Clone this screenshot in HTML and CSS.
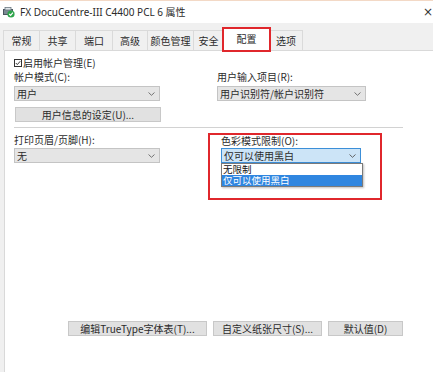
FILE: index.html
```html
<!DOCTYPE html>
<html>
<head>
<meta charset="utf-8">
<link rel="stylesheet" href="styles.css">
</head>
<body>
<div class="titlebar">
  <svg class="appicon" width="12" height="11" viewBox="0 0 12 11">
    <rect x="0.5" y="2.5" width="9" height="5" fill="#7c8a94" stroke="#4a5660"/>
    <rect x="2" y="0.5" width="6" height="2.5" fill="#dfe6ea" stroke="#6b7880" stroke-width="0.8"/>
    <circle cx="8" cy="7" r="3.6" fill="#2da44a"/>
    <path d="M6.2 7 L7.6 8.4 L9.9 5.7" fill="none" stroke="#fff" stroke-width="1.2"/>
  </svg>
  <span class="title">FX DocuCentre-III C4400 PCL 6 属性</span>
  <span class="close">×</span>
</div>
<div class="tabbar">
  <div class="tab w36">常规</div>
  <div class="tab w36">共享</div>
  <div class="tab w37">端口</div>
  <div class="tab w35">高级</div>
  <div class="tab w46">颜色管理</div>
  <div class="tab w30">安全</div>
  <div class="tab tab-active w46">配置</div>
  <div class="tab w33">选项</div>
</div>
<div class="panel">
  <div class="check-row">
    <svg class="checkbox" width="8" height="8" viewBox="0 0 8 8">
      <rect x="0.5" y="0.5" width="7" height="7" fill="#fff" stroke="#333"/>
      <path d="M1.8 4 L3.3 5.6 L6.3 2.2" fill="none" stroke="#222" stroke-width="0.9"/>
    </svg>
    <span>启用帐户管理(E)</span>
  </div>
  <div class="cols top-cols">
    <div class="col-left">
      <div class="label">帐户模式(C):</div>
      <div class="select"><span>用户</span><svg class="chev" width="7" height="4" viewBox="0 0 7 4"><path d="M0.5 0.5 L3.5 3.3 L6.5 0.5" fill="none" stroke="#666" stroke-width="0.9"/></svg></div>
      <div class="button btn-wide">用户信息的设定(U)...</div>
    </div>
    <div class="col-right">
      <div class="label">用户输入项目(R):</div>
      <div class="select"><span>用户识别符/帐户识别符</span><svg class="chev" width="7" height="4" viewBox="0 0 7 4"><path d="M0.5 0.5 L3.5 3.3 L6.5 0.5" fill="none" stroke="#666" stroke-width="0.9"/></svg></div>
    </div>
  </div>
  <div class="separator"></div>
  <div class="cols bottom-cols">
    <div class="col-left col-left-2">
      <div class="label">打印页眉/页脚(H):</div>
      <div class="select"><span>无</span><svg class="chev" width="7" height="4" viewBox="0 0 7 4"><path d="M0.5 0.5 L3.5 3.3 L6.5 0.5" fill="none" stroke="#666" stroke-width="0.9"/></svg></div>
    </div>
    <div class="redbox">
      <div class="label">色彩模式限制(O):</div>
      <div class="select select-open"><span>仅可以使用黑白</span><svg class="chev" width="7" height="4" viewBox="0 0 7 4"><path d="M0.5 0.5 L3.5 3.3 L6.5 0.5" fill="none" stroke="#555" stroke-width="0.9"/></svg>
        <div class="dropdown">
          <div class="option">无限制</div>
          <div class="option option-selected">仅可以使用黑白</div>
        </div>
      </div>
    </div>
  </div>
  <div class="bottom-buttons">
    <div class="button b1">编辑TrueType字体表(T)...</div>
    <div class="button b2">自定义纸张尺寸(S)...</div>
    <div class="button b3">默认值(D)</div>
  </div>
</div>
</body>
</html>
```
FILE: styles.css
```css
* { box-sizing: border-box; }
html, body {
  margin: 0;
  padding: 0;
}
body {
  width: 433px;
  height: 372px;
  overflow: hidden;
  background: #f0f0f0;
  font-family: "Noto Sans CJK SC", "Noto Sans", sans-serif;
  font-size: 10px;
  line-height: 12px;
  color: #2b2b2b;
}
.titlebar {
  height: 23px;
  background: #fff;
  border-top: 1px solid #f3d9c6;
  display: flex;
  align-items: center;
  padding-left: 3px;
}
.appicon { margin-right: 5px; margin-top: 1px; }
.title {
  font-family: "Noto Sans", "Noto Sans CJK SC", sans-serif;
  font-size: 10px;
  color: #2b2b2b;
}
.close {
  margin-left: auto;
  margin-right: 0;
  font-family: "DejaVu Sans", sans-serif;
  font-size: 12px;
  color: #333;
}
.tabbar {
  height: 27px;
  display: flex;
  align-items: flex-end;
  padding-left: 3px;
  background: #f0f0f0;
}
.tab {
  height: 20px;
  display: flex;
  align-items: center;
  justify-content: center;
  border: 1px solid #dadada;
  border-bottom: none;
  margin-right: -1px;
  background: #f0f0f0;
  color: #2b2b2b;
}
.w30 { width: 31px; }
.w33 { width: 34px; }
.w35 { width: 36px; }
.w36 { width: 37px; }
.w37 { width: 38px; }
.w46 { width: 47px; }
.tab-active {
  height: 23px;
  margin-bottom: -1px;
  background: #fff;
  position: relative;
  z-index: 2;
  outline: 2px solid #e0272c;
  outline-offset: -1px;
  padding-bottom: 2px;
}
.panel {
  margin-left: 4px;
  height: 322px;
  background: #fff;
  border-top: 1px solid #d9d9d9;
  border-left: 1px solid #d9d9d9;
  padding-left: 9px;
  padding-top: 6px;
}
.check-row {
  display: flex;
  align-items: center;
  height: 12px;
}
.checkbox { margin-right: 1px; }
.cols { display: flex; }
.top-cols { margin-top: 2px; }
.col-left { width: 146px; }
.col-right { margin-left: 57px; width: 149px; }
.label { height: 12px; }
.select {
  margin-top: 3px;
  height: 15px;
  background: #e5e5e5;
  border: 1px solid #c4c4c4;
  display: flex;
  align-items: center;
  justify-content: space-between;
  padding: 0 4px 0 2px;
  position: relative;
}
.chev { flex: none; }
.button {
  height: 15px;
  background: #e1e1e1;
  border: 1px solid #c8c8c8;
  display: flex;
  align-items: center;
  justify-content: center;
  color: #2b2b2b;
}
.btn-wide { margin-top: 6px; width: 146px; margin-left: 1px; }
.separator {
  margin-top: 5px;
  width: 389px;
  height: 1px;
  background: #d2d2d2;
}
.bottom-cols { margin-top: 5px; }
.col-left-2 { padding-top: 1px; }
.col-left-2 .select { margin-top: 2px; }
.redbox {
  margin-left: 48px;
  width: 174px;
  height: 67px;
  border: 2px solid #e0272c;
  padding-left: 11px;
}
.redbox .select {
  margin-top: 1px;
  width: 140px;
}
.select-open {
  background: #cce4f7;
  border-color: #3c8fd8;
}
.dropdown {
  position: absolute;
  left: -1px;
  top: 14px;
  width: 142px;
  background: #fff;
  border: 1px solid #7a7a7a;
  box-shadow: 1px 1px 2px rgba(0,0,0,0.25);
  z-index: 3;
}
.option {
  height: 11px;
  line-height: 11px;
  font-size: 9.5px;
  padding-left: 1px;
  color: #111;
}
.option-selected {
  background: #2f86e0;
  color: #fff;
}
.bottom-buttons {
  margin-top: 121px;
  margin-left: 54px;
  display: flex;
  gap: 6px;
}
.b1 { width: 139px; }
.b2 { width: 109px; }
.b3 { width: 75px; }
```
